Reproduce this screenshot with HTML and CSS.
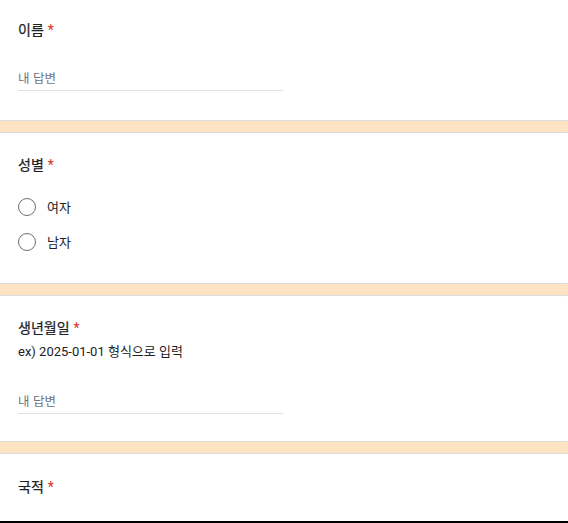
FILE: index.html
```html
<!DOCTYPE html>
<html lang="ko">
<head>
<meta charset="utf-8">
<link rel="stylesheet" href="styles.css">
</head>
<body>
<div class="page">
  <section class="card card-first">
    <div class="title">이름 <span class="req">*</span></div>
    <div class="answer">내 답변</div>
  </section>
  <section class="card card-gender">
    <div class="title">성별 <span class="req">*</span></div>
    <div class="options">
      <label class="option"><span class="radio"></span><span>여자</span></label>
      <label class="option"><span class="radio"></span><span>남자</span></label>
    </div>
  </section>
  <section class="card card-birth">
    <div class="title">생년월일 <span class="req">*</span></div>
    <div class="desc">ex) 2025-01-01 형식으로 입력</div>
    <div class="answer">내 답변</div>
  </section>
  <section class="card card-last">
    <div class="title">국적 <span class="req">*</span></div>
  </section>
</div>
<div class="bottom-bar"></div>
</body>
</html>
```
FILE: styles.css
```css
html, body {
  margin: 0;
  padding: 0;
}
body {
  width: 568px;
  height: 523px;
  overflow: hidden;
  background: #fde3c2;
  font-family: Roboto, "Noto Sans CJK KR", sans-serif;
  color: #202124;
  position: relative;
}
.page {
  display: flex;
  flex-direction: column;
  gap: 11px;
}
.card {
  background: #fff;
  border: 1px solid #dadce0;
  border-radius: 8px;
  margin-left: -10px;
  margin-right: -6px;
  padding-left: 27px;
  box-sizing: border-box;
}
.card-first {
  border-top: none;
  border-radius: 0 0 8px 8px;
  height: 121px;
  padding-top: 19px;
}
.card-gender {
  height: 152px;
  padding-top: 21px;
}
.card-birth {
  height: 147px;
  padding-top: 21px;
}
.card-last {
  height: 90px;
  padding-top: 22px;
}
.title {
  font-size: 14px;
  font-weight: 400;
  line-height: 20px;
  color: #202124;
  font-family: "Noto Sans CJK KR", sans-serif;
  -webkit-text-stroke: 0.25px #202124;
}
.req {
  color: #d93025;
  font-family: Roboto, sans-serif;
  -webkit-text-stroke: 0;
}
.answer {
  width: 265px;
  margin-top: 29px;
  font-size: 12.5px;
  line-height: 18px;
  color: #70757a;
  padding-bottom: 3px;
  border-bottom: 1px solid #e0e0e0;
  font-family: "Noto Sans CJK KR", sans-serif;
}
.card-birth .answer {
  margin-top: 31px;
}
.desc {
  margin-top: 5px;
  font-size: 13px;
  line-height: 18px;
  color: #202124;
  font-family: Roboto, "Noto Sans CJK KR", sans-serif;
}
.options {
  display: flex;
  flex-direction: column;
  gap: 15px;
  margin-top: 22px;
}
.option {
  display: flex;
  align-items: center;
  gap: 11px;
  font-size: 13px;
  line-height: 20px;
  font-family: "Noto Sans CJK KR", sans-serif;
}
.radio {
  width: 18px;
  height: 18px;
  box-sizing: border-box;
  border: 1.5px solid #6b6e72;
  border-radius: 50%;
  flex: none;
}
.bottom-bar {
  position: absolute;
  left: 0;
  right: 0;
  bottom: 0;
  height: 2px;
  background: #000;
}
```
